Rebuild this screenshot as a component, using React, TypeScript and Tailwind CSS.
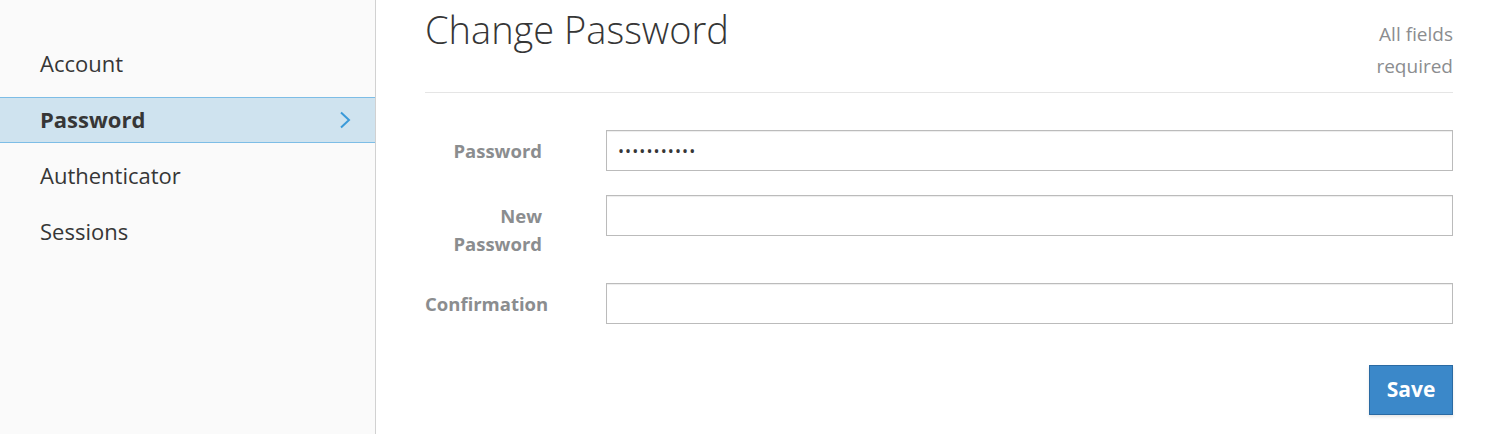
import React from "react";

const navItems = ["Account", "Password", "Authenticator", "Sessions"];

function Row({ label, value }: { label: React.ReactNode; value?: string }) {
  return (
    <div className="flex items-start">
      <div className="w-[117px] shrink-0 text-right pt-[7px] pb-[1px] leading-[28px] text-[18.5px] font-bold text-[#8b8d8f]">
        {label}
      </div>
      <div className="ml-[64px] flex-1 h-[41px] border border-[#bbbbbb] bg-white shadow-[inset_0_1px_1px_rgba(0,0,0,0.075)] flex items-center pl-[11px] text-[16px] text-[#363636] tracking-[1.1px]">
        {value}
      </div>
    </div>
  );
}

export default function App() {
  return (
    <div className="flex w-[1492px] h-[434px] bg-white font-['Open_Sans',sans-serif] text-[#363636] overflow-hidden">
      <aside className="w-[376px] shrink-0 h-full bg-[#fafafa] border-r border-[#d1d1d1] pt-[40px] flex flex-col gap-[10px]">
        {navItems.map((item) =>
          item === "Password" ? (
            <div
              key={item}
              className="h-[46px] mt-[1px] -mb-[1px] flex items-center justify-between pl-[40px] pr-[24px] bg-[#cfe3ef] border-y border-[#7dbde6] text-[22px] font-bold text-[#363636]"
            >
              <span className="-mt-[1px]">{item}</span>
              <svg width="12" height="18" viewBox="0 0 12 18" fill="none">
                <polyline points="2,1.5 10,9 2,16.5" stroke="#3a9ad9" strokeWidth="2" />
              </svg>
            </div>
          ) : (
            <div key={item} className="h-[46px] flex items-center pl-[40px] text-[22px] text-[#363636]">
              {item}
            </div>
          )
        )}
      </aside>
      <main className="flex-1 pl-[49px] pr-[39px]">
        <div className="flex justify-between items-start">
          <h2 className="mt-[8px] text-[38px] font-light leading-[42px] text-[#363636]">Change Password</h2>
          <div className="mt-[18px] w-[100px] text-right text-[19px] leading-[32px] text-[#8b8d8f]">
            All fields required
          </div>
        </div>
        <div className="mt-[10px] border-t border-[#e5e5e5]" />
        <div className="mt-[37px] flex flex-col gap-[24px]">
          <Row label="Password" value="•••••••••••" />
          <Row label="New Password" />
          <Row label="Confirmation" />
        </div>
        <div className="mt-[41px] flex justify-end">
          <button className="w-[84px] h-[50px] bg-[#3b88c9] border border-[#2a6aa3] text-white text-[21px] font-bold shadow-[0_2px_3px_rgba(0,0,0,0.1)]">
            Save
          </button>
        </div>
      </main>
    </div>
  );
}
